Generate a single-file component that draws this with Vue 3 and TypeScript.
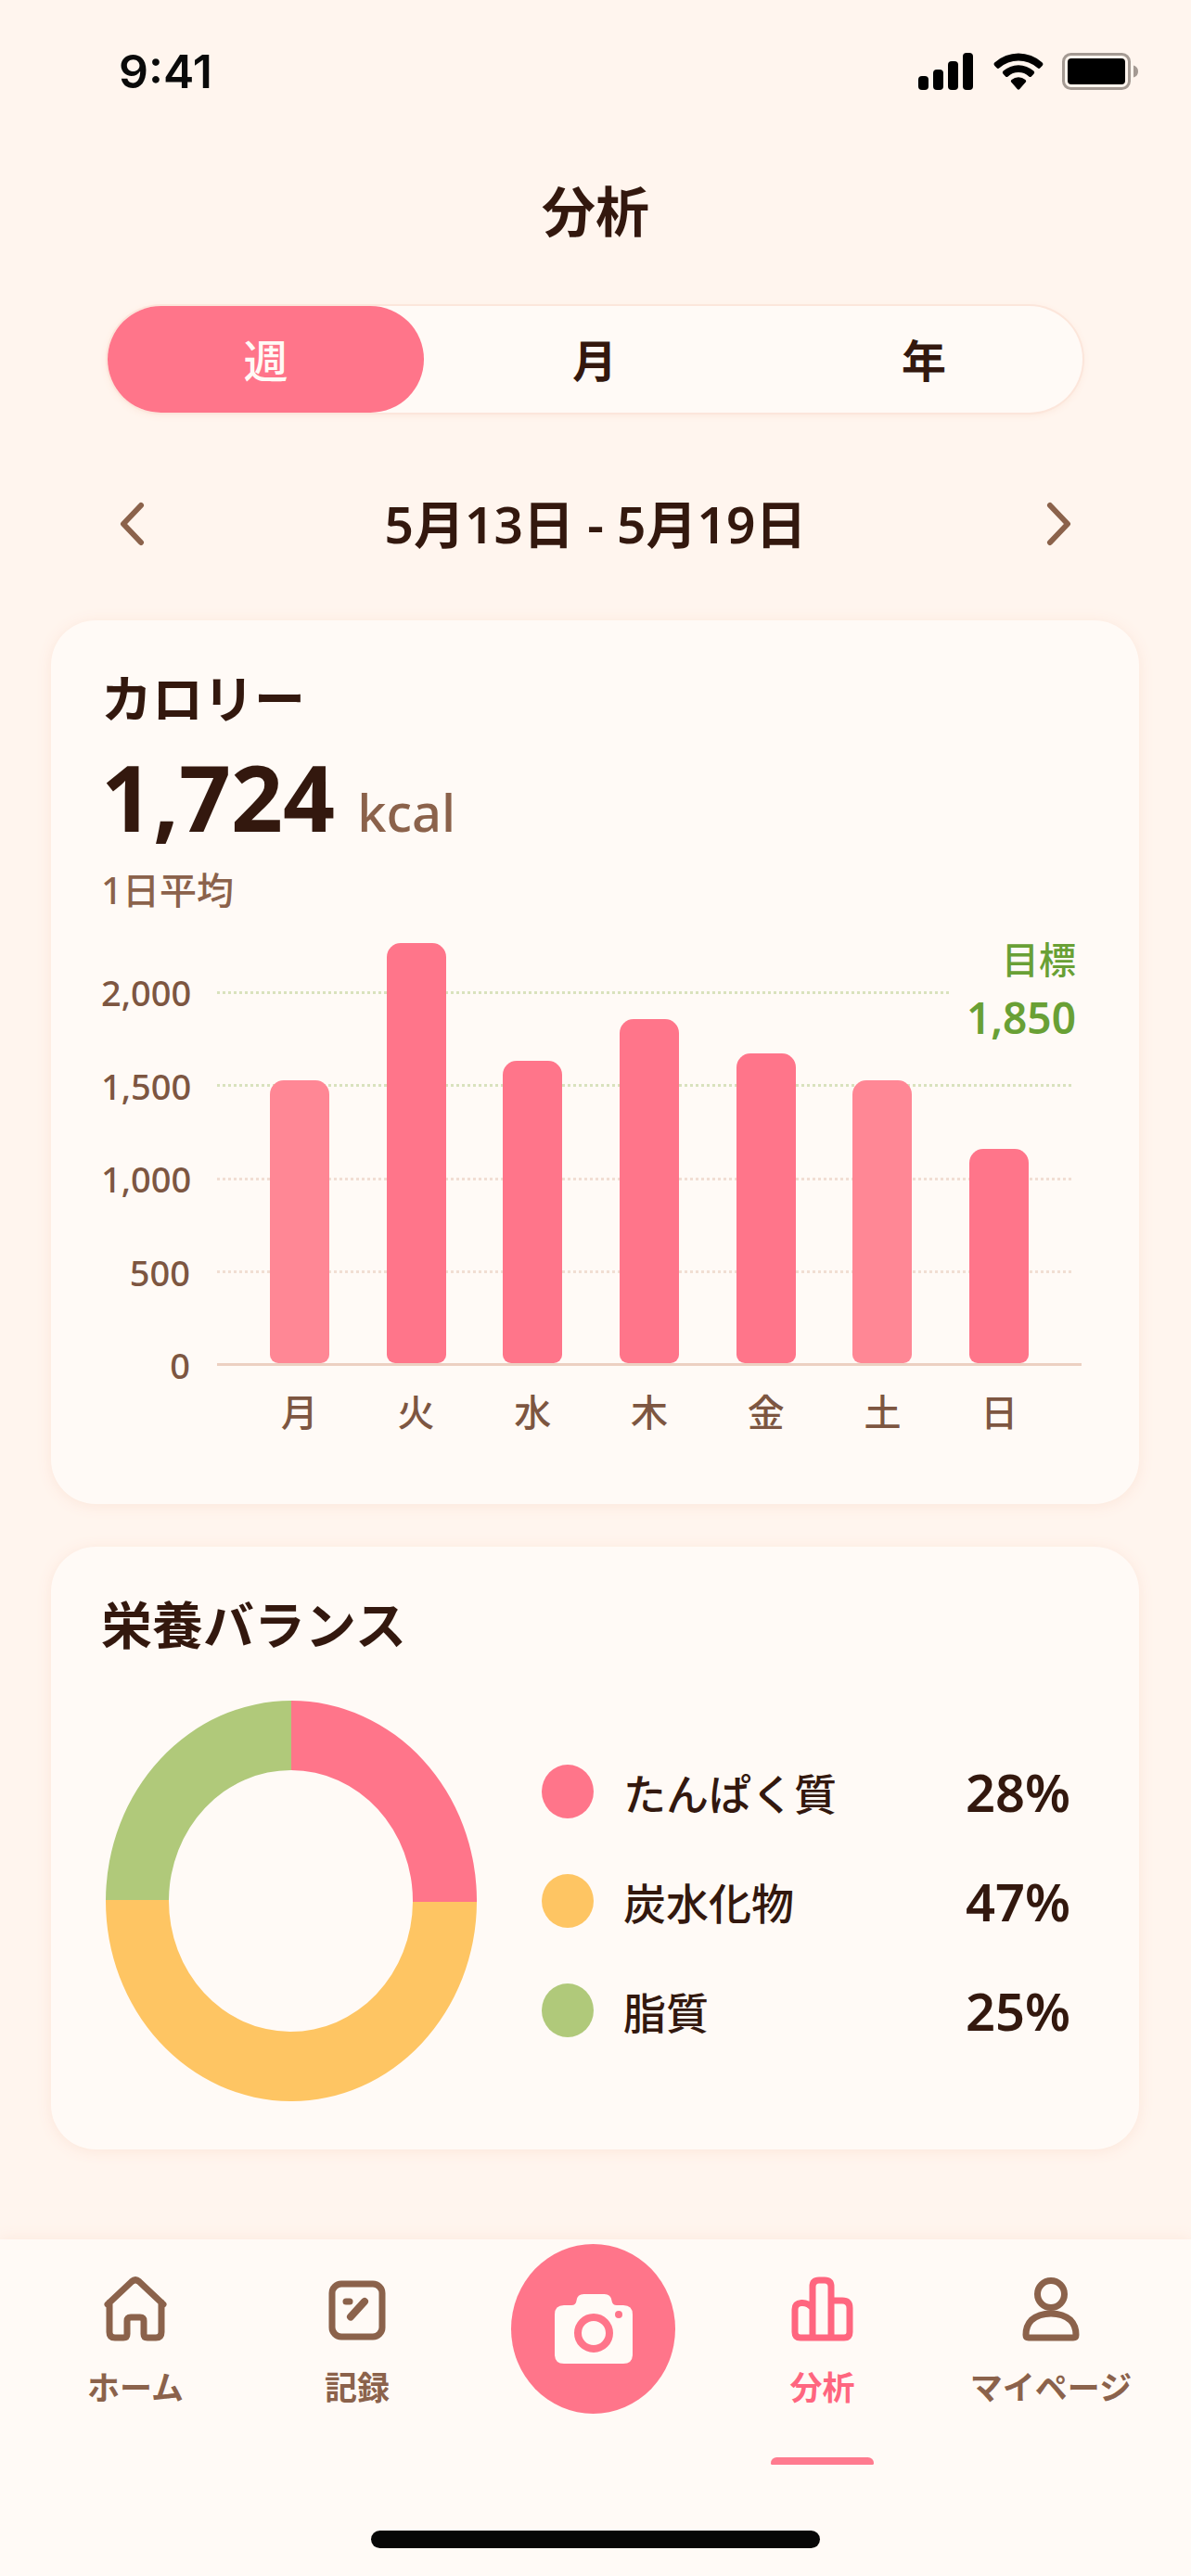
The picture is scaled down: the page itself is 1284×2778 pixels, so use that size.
<script setup lang="ts">
import { ref } from 'vue'

interface Bar {
  day: string
  kcal: number
  soft?: boolean
}

interface Nutrient {
  name: string
  percent: number
  tone: string
}

const periods = ['週', '月', '年']
const activePeriod = ref('週')

const axisMax = 2000
const axisLabels = ['2,000', '1,500', '1,000', '500', '0']
const bars: Bar[] = [
  { day: '月', kcal: 1520, soft: true },
  { day: '火', kcal: 2260 },
  { day: '水', kcal: 1624 },
  { day: '木', kcal: 1850 },
  { day: '金', kcal: 1668 },
  { day: '土', kcal: 1520, soft: true },
  { day: '日', kcal: 1150 },
]

const nutrients: Nutrient[] = [
  { name: 'たんぱく質', percent: 28, tone: 'pink' },
  { name: '炭水化物', percent: 47, tone: 'amber' },
  { name: '脂質', percent: 25, tone: 'green' },
]

const barHeight = (kcal: number): string => `${(kcal / axisMax) * 100}%`
</script>

<template>
  <div class="screen">
    <header class="status">
      <span class="time">9:41</span>
      <div class="indicators">
        <svg width="61" height="40" viewBox="0 0 61 40" aria-hidden="true">
          <rect x="0" y="25" width="11" height="15" rx="4" />
          <rect x="16" y="18" width="11" height="22" rx="4" />
          <rect x="32" y="9" width="11" height="31" rx="4" />
          <rect x="48" y="0" width="11" height="40" rx="4" />
        </svg>
        <svg width="54" height="40" viewBox="0 0 54 40" aria-hidden="true">
          <path d="M1.6 10.2a38 38 0 0 1 50.8 0q2 1.800 .2 3.700l-2.200 2.400q-1.300 1.200-2.800 0a31 31 0 0 0-41.200 0q-1.500 1.200-2.800 0l-2.200-2.400q-1.800-1.900 0-3.700z" />
          <path d="M10.600 19.600a24.500 24.500 0 0 1 32.800 0q1.700 1.600 .1 3.200l-2.600 2.600q-1.200 1.100-2.600 0a17 17 0 0 0-22.600 0q-1.400 1.100-2.600 0l-2.600-2.600q-1.600-1.600.1-3.200z" />
          <path d="M19.600 29a11.500 11.500 0 0 1 14.800 0q1.500 1.300 .2 2.700l-6.300 7.300q-1.300 1.400-2.600 0l-6.300-7.300q-1.300-1.400.2-2.700z" />
        </svg>
        <svg width="83" height="40" viewBox="0 0 83 40" aria-hidden="true">
          <rect x="1.500" y="1.500" width="71" height="37" rx="8" fill="none" stroke="#a49a93" stroke-width="3" />
          <rect x="6" y="6" width="62" height="28" rx="4" />
          <path d="M77 13.500q5 1.500 5 6.500t-5 6.500z" fill="#a49a93" />
        </svg>
      </div>
    </header>

    <main class="content">
      <h1 class="title">分析</h1>

      <div class="segments" role="group" aria-label="期間">
        <button
          v-for="p in periods"
          :key="p"
          type="button"
          class="segment"
          :class="{ active: p === activePeriod }"
          :aria-pressed="p === activePeriod"
          @click="activePeriod = p"
        >
          {{ p }}
        </button>
      </div>

      <div class="range">
        <button type="button" class="arrow" aria-label="前の週">
          <svg width="28" height="48" viewBox="0 0 28 48"><path d="M24 4 5 24l19 20" /></svg>
        </button>
        <p class="dates">5月13日 - 5月19日</p>
        <button type="button" class="arrow" aria-label="次の週">
          <svg width="28" height="48" viewBox="0 0 28 48"><path d="m4 4 19 20L4 44" /></svg>
        </button>
      </div>

      <section class="card calories">
        <h2 class="heading">カロリー</h2>
        <p class="total"><strong>1,724</strong><span>kcal</span></p>
        <p class="note">1日平均</p>

        <div class="chart">
          <div class="axis">
            <span v-for="label in axisLabels" :key="label">{{ label }}</span>
          </div>
          <div class="plot">
            <div class="grid"><i></i><i></i><i></i><i></i></div>
            <div class="bars">
              <div v-for="b in bars" :key="b.day" class="slot">
                <div class="bar" :class="{ soft: b.soft }" :style="{ height: barHeight(b.kcal) }"></div>
              </div>
            </div>
            <p class="target"><span>目標</span><strong>1,850</strong></p>
          </div>
          <div class="days">
            <span v-for="b in bars" :key="b.day">{{ b.day }}</span>
          </div>
        </div>
      </section>

      <section class="card nutrition">
        <h2 class="heading">栄養バランス</h2>
        <div class="balance">
          <svg class="donut" width="405" height="432" viewBox="-5 0 405 432" role="img" aria-label="栄養バランス">
            <path fill="#ff758a" d="M200 0A200 216 0 0 1 400 218H331A131 141 0 0 0 200 75z" />
            <path fill="#fec563" d="M400 217A200 216 0 0 1 0 215H68A131.500 141 0 0 0 331 217z" />
            <path fill="#b0c97a" d="M0 215A200 216 0 0 1 200 0V75A131.500 141 0 0 0 68 215z" />
          </svg>
          <ul class="legend">
            <li v-for="n in nutrients" :key="n.name">
              <i class="dot" :class="n.tone"></i>
              <span class="name">{{ n.name }}</span>
              <strong>{{ n.percent }}%</strong>
            </li>
          </ul>
        </div>
      </section>
    </main>

    <nav class="tabbar">
      <div class="tabs">
        <a href="#home" class="tab">
          <svg width="70" height="70" viewBox="0 0 70 70" aria-hidden="true">
            <path d="M5 30 31 5.500q4-3.500 8 0L65 30M7 28v32q0 6 6 6h9q4 0 4-4V48q0-4 4-4h10q4 0 4 4v14q0 4 4 4h9q6 0 6-6V28" />
          </svg>
          <span>ホーム</span>
        </a>
        <a href="#record" class="tab">
          <svg width="70" height="70" viewBox="0 0 70 70" aria-hidden="true">
            <rect x="8" y="8" width="54" height="57" rx="10" />
            <path d="M23 27h4" />
            <path d="M43 27 28 43.500" stroke-width="8" />
          </svg>
          <span>記録</span>
        </a>
        <button type="button" class="camera" aria-label="写真を撮る">
          <svg width="84" height="76" viewBox="0 0 84 76" aria-hidden="true">
            <path fill="#fffaf6" d="M10 12h8q5 0 5.500-5 .8-7 8-7h22q7 0 8 7 .5 5 5.500 5h7q10 0 10 10v43q0 10-10 10H10Q0 75 0 65V22q0-10 10-10z" />
            <circle cx="42" cy="42" r="17" fill="none" stroke="#ff758a" stroke-width="8" />
            <circle cx="69" cy="22" r="4" fill="#ff758a" />
          </svg>
        </button>
        <a href="#analysis" class="tab current" aria-current="page">
          <svg width="70" height="70" viewBox="0 0 70 70" aria-hidden="true">
            <path d="M24 34Q19 28 12 28.500q-7 .5-7 7V60q0 6 6 6h13zM24 66V11q0-7 7-7h6q7 0 7 7v55zM44 26h12q8 0 8 8v26q0 6-6 6H44z" />
          </svg>
          <span>分析</span>
        </a>
        <a href="#mypage" class="tab">
          <svg width="70" height="70" viewBox="0 0 70 70" aria-hidden="true">
            <circle cx="35" cy="19" r="14.500" />
            <path d="M8 63q0-10 6-16 8-7 21-7t21 7q6 6 6 16 0 3-3 3H11q-3 0-3-3z" />
          </svg>
          <span>マイページ</span>
        </a>
      </div>
      <div class="home-indicator"></div>
    </nav>
  </div>
</template>

<style>
body {
  margin: 0;
  background: #fff5ee;
}
</style>

<style scoped>
.screen {
  display: flex;
  flex-direction: column;
  min-height: 100vh;
  background: #fff5ee;
  color: #33180e;
  font-family: 'Noto Sans', 'Noto Sans CJK JP', sans-serif;
}

h1,
h2,
p,
ul {
  margin: 0;
  padding: 0;
}

button {
  border: 0;
  padding: 0;
  background: none;
  color: inherit;
  font: inherit;
  cursor: pointer;
}

svg {
  display: block;
}

.status {
  display: flex;
  align-items: center;
  justify-content: space-between;
  height: 154px;
  padding: 0 56px 0 128px;
}

.time {
  color: #0a0a0a;
  font-family: Inter, sans-serif;
  font-size: 50px;
  font-weight: 600;
}

.indicators {
  display: flex;
  gap: 20px;
}

.title {
  margin-top: 34px;
  font-size: 58px;
  font-weight: 700;
  line-height: 80px;
  text-align: center;
}

.segments {
  display: grid;
  grid-template-columns: 341fr 368fr 342fr;
  height: 115px;
  margin: 62px 117px 0 116px;
  border-radius: 58px;
  background: #fffaf6;
  box-shadow: 0 0 0 2px #fce6db, 0 2px 8px #fbe6d9;
}

.segment {
  padding-bottom: 4px;
  border-radius: 58px;
  font-size: 48px;
  font-weight: 700;
}

.segment.active {
  background: #ff758a;
  color: #fffaf6;
  font-weight: 500;
}

.range {
  display: flex;
  align-items: center;
  justify-content: space-between;
  margin: 88px 128px 0;
}

.arrow svg {
  fill: none;
  stroke: #8b624b;
  stroke-width: 6;
  stroke-linecap: round;
  stroke-linejoin: round;
}

.dates {
  font-size: 55px;
  font-weight: 600;
  line-height: 64px;
}

.card {
  margin: 0 56px 0 55px;
  padding: 52px 56px 52px 54px;
  border-radius: 48px;
  background: #fffaf6;
  box-shadow: 0 2px 16px #fce6da;
}

.calories {
  margin-top: 72px;
  padding-bottom: 75px;
}

.nutrition {
  margin-top: 46px;
}

.heading {
  font-size: 55px;
  font-weight: 700;
  line-height: 64px;
}

.total {
  display: flex;
  align-items: baseline;
  gap: 24px;
  margin-top: 24px;
}

.total strong {
  font-size: 98px;
  font-weight: 700;
  line-height: 100px;
}

.total span {
  color: #8b624b;
  font-size: 56px;
  font-weight: 500;
  line-height: 64px;
}

.note {
  margin-top: 27px;
  color: #8b624b;
  font-size: 40px;
  font-weight: 500;
  line-height: 48px;
}

.chart {
  display: grid;
  grid-template-columns: 96px 1fr;
  column-gap: 29px;
  margin-top: 66px;
  padding-right: 6px;
}

.axis {
  display: flex;
  flex-direction: column;
  justify-content: space-between;
  height: 442px;
  color: #7d5641;
  font-size: 38px;
  font-weight: 500;
  line-height: 40px;
  text-align: right;
}

.plot {
  position: relative;
  box-sizing: border-box;
  height: 404px;
  margin-top: 19px;
  border-bottom: 3px solid #ecd0c2;
}

.grid {
  display: grid;
  grid-template-rows: repeat(4, 1fr);
  height: 100%;
  padding-right: 8px;
}

.grid i {
  height: 3px;
  background: repeating-linear-gradient(90deg, #f1ded3 0 3px, transparent 3px 6px);
}

.grid i:nth-child(-n + 2) {
  background: repeating-linear-gradient(90deg, #d9e2bd 0 3px, transparent 3px 6px);
}

.grid i:first-child {
  margin-right: 132px;
}

.bars {
  position: absolute;
  inset: 0;
  display: flex;
  padding: 0 26px;
}

.slot {
  display: flex;
  flex: 1;
  align-items: flex-end;
  justify-content: center;
}

.bar {
  width: 64px;
  border-radius: 15px 15px 9px 9px;
  background: #ff758a;
}

.bar.soft {
  background: #ff8795;
}

.target {
  position: absolute;
  top: -58px;
  right: 6px;
  display: flex;
  flex-direction: column;
  color: #69a035;
  text-align: right;
}

.target span {
  font-size: 40px;
  font-weight: 500;
  line-height: 48px;
}

.target strong {
  font-size: 46px;
  font-weight: 600;
  line-height: 76px;
}

.days {
  display: flex;
  grid-column: 2;
  margin-top: 7px;
  padding: 0 26px;
  color: #7d5641;
  font-size: 40px;
  font-weight: 500;
  line-height: 48px;
  text-align: center;
}

.days span {
  flex: 1;
}

.balance {
  display: flex;
  align-items: center;
  gap: 70px;
  margin-top: 50px;
}

.legend {
  display: flex;
  flex: 1;
  flex-direction: column;
  gap: 60px;
  padding-right: 18px;
  list-style: none;
}

.legend li {
  display: flex;
  align-items: center;
  height: 58px;
}

.dot {
  width: 56px;
  height: 58px;
  margin-right: 32px;
  border-radius: 50%;
}

.pink {
  background: #ff758a;
}

.amber {
  background: #fec563;
}

.green {
  background: #b0c97a;
}

.name {
  flex: 1;
  font-size: 46px;
  font-weight: 500;
}

.legend strong {
  font-size: 56px;
  font-weight: 600;
}

.tabbar {
  margin-top: auto;
  padding-bottom: 30px;
  background: #fffaf6;
  box-shadow: 0 -2px 14px #fdeadf;
}

.tabs {
  display: grid;
  grid-template-columns: 248fr 230fr 279fr 215fr 278fr;
  align-items: start;
  justify-items: center;
  height: 314px;
  padding: 0 12px 0 22px;
}

.tab {
  display: flex;
  flex-direction: column;
  align-items: center;
  padding-top: 40px;
  color: #8b624b;
  font-size: 35px;
  font-weight: 700;
  line-height: 48px;
  text-decoration: none;
}

.tab svg {
  margin-bottom: 26px;
  fill: none;
  stroke: currentColor;
  stroke-width: 7;
  stroke-linecap: round;
  stroke-linejoin: round;
}

.tab.current {
  color: #ff667f;
}

.tab.current::after {
  content: '';
  width: 111px;
  height: 8px;
  margin-top: 51px;
  border-radius: 8px 8px 2px 2px;
  background: #ff7b8f;
}

.camera {
  display: flex;
  align-items: center;
  justify-content: center;
  width: 177px;
  height: 183px;
  margin-top: 5px;
  border-radius: 50%;
  background: #ff758a;
}

.home-indicator {
  width: 38%;
  max-width: 484px;
  height: 19px;
  margin: 0 auto;
  border-radius: 10px;
  background: #070707;
}
</style>
